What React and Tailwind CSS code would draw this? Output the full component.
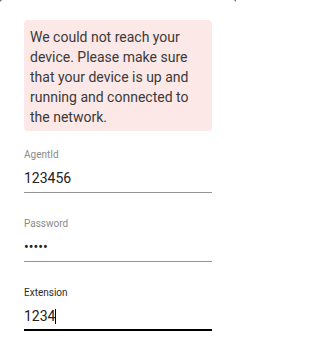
import React from "react";

function Field({ label, children, focused, first }) {
  return (
    <div className={first ? "mt-[18px]" : "mt-[25px]"}>
      <div
        className={
          "text-[10px] leading-[12px] " +
          (focused ? "text-[#2b2b2b]" : "text-[#8a8a8a]")
        }
      >
        {label}
      </div>
      <div
        className={
          "mt-[7px] h-[20px] box-content text-[14px] leading-[20px] text-[#222] flex items-center " +
          (focused
            ? "pb-[3px] border-b-2 border-black"
            : "pb-[4px] border-b border-[#949494]")
        }
      >
        {children}
      </div>
    </div>
  );
}

export default function App() {
  return (
    <div
      className="w-[236px] h-[358px] bg-[#5a5a5a]"
      style={{ fontFamily: "Roboto, 'Noto Sans', sans-serif" }}
    >
      <div className="w-full h-full bg-white rounded-t-[3px] px-6 pt-5">
        <div className="bg-[#fce8e6] rounded-[4px] pl-[6px] pr-[6px] pt-[7px] pb-[4px] text-[14px] leading-[20px] text-[#3a3a3a]">
          We could not reach your device. Please make sure that your device is
          up and running and connected to the network.
        </div>
        <Field label="AgentId" first>
          <span>123456</span>
        </Field>
        <Field label="Password">
          <input
            type="password"
            value="12345"
            readOnly
            className="w-full bg-transparent outline-none p-0 text-[14px] leading-[20px] h-[20px] text-[#222]"
            style={{ fontFamily: "Roboto, sans-serif" }}
          />
        </Field>
        <Field label="Extension" focused>
          <span>1234</span>
          <span className="inline-block w-px h-[15px] bg-black"></span>
        </Field>
      </div>
    </div>
  );
}
